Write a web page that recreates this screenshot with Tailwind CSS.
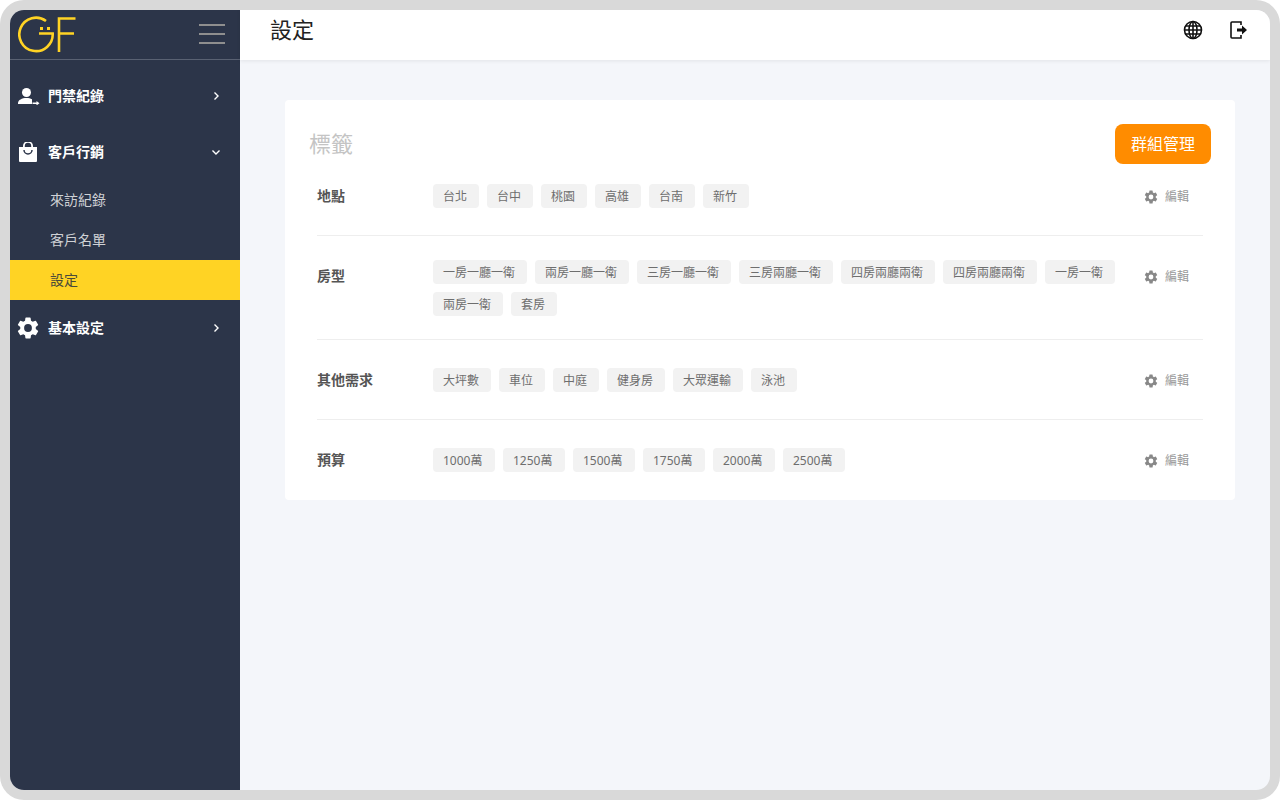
<!DOCTYPE html>
<html lang="zh-Hant">
<head>
  <meta charset="UTF-8">
  <title>設定</title>
  <script src="https://cdn.jsdelivr.net/npm/@tailwindcss/browser@4"></script>
</head>
<body class="bg-white font-['Roboto','Noto_Sans_CJK_TC',sans-serif]">
  <div class="w-[1280px] h-[800px] bg-[#d9d9d9] rounded-[24px] p-[10px] overflow-hidden">
    <div class="flex h-[780px] rounded-[14px] overflow-hidden bg-[#f4f6fa]">

      <!-- Sidebar -->
      <aside class="w-[230px] shrink-0 bg-[#2c3549] text-white">
        <div class="h-[50px] flex items-center justify-between border-b border-[#596172] pl-[8px] pr-[15px] pb-[1px]">
          <svg class="w-[58px] h-[38px] -mt-[1px]" viewBox="0 0 58 38" fill="none" stroke="#ffd324" stroke-width="2.600">
            <path d="M28 6A16.700 16.700 0 1 0 34.700 18.500H21"/>
            <rect x="22" y="12" width="3" height="3" fill="#ffd324" stroke="none"/>
            <rect x="29" y="12" width="3" height="3" fill="#ffd324" stroke="none"/>
            <path d="M41 37V3.500H57.500M41 18.500H56"/>
          </svg>
          <div class="w-[26px] flex flex-col gap-[7px]">
            <div class="h-[2px] bg-[#8f8f8f]"></div>
            <div class="h-[2px] bg-[#8f8f8f]"></div>
            <div class="h-[2px] bg-[#8f8f8f]"></div>
          </div>
        </div>
        <nav class="pt-[8px]">
          <div class="h-[56px] flex items-center pl-[8px] pr-[18px] text-[14px] font-bold">
            <svg class="w-[22px] h-[18px] mr-[8px]" viewBox="0 0 22 18" fill="white">
              <circle cx="8.500" cy="5.500" r="4.500"/>
              <path d="M0 17v-1c0-3 4-5 8.500-5 2 0 4 .4 5.500 1.200V17z"/>
              <path d="M14.500 15.500h4v-1.500l3 2.200-3 2.200v-1.500h-4z"/>
            </svg>
            <span class="flex-1">門禁紀錄</span>
            <svg class="w-[12px] h-[12px]" viewBox="0 0 12 12" fill="none" stroke="white" stroke-width="1.4"><path d="M4.5 2.5 8 6l-3.500 3.500"/></svg>
          </div>
          <div class="h-[56px] flex items-center pl-[8px] pr-[18px] text-[14px] font-bold">
            <svg class="w-[22px] h-[20px] mr-[8px]" viewBox="0 0 22 20" fill="white">
              <g transform="translate(-1 0)">
                <path fill-rule="evenodd" d="M2 5h4V4a5 5 0 0 1 10 0v1h4v14a1 1 0 0 1-1 1H3a1 1 0 0 1-1-1zM7.800 5h6.400V4a3.200 3.200 0 0 0-6.400 0z"/>
                <path d="M7 8a4 4 0 0 0 8 0" fill="none" stroke="#2c3549" stroke-width="1.500"/>
              </g>
            </svg>
            <span class="flex-1">客戶行銷</span>
            <svg class="w-[12px] h-[12px]" viewBox="0 0 12 12" fill="none" stroke="white" stroke-width="1.4"><path d="M2.500 4.500 6 8l3.500-3.500"/></svg>
          </div>
          <div class="h-[40px] flex items-center pl-[40px] text-[14px] text-[#d0d2d6]">來訪紀錄</div>
          <div class="h-[40px] flex items-center pl-[40px] text-[14px] text-[#d0d2d6]">客戶名單</div>
          <div class="h-[40px] flex items-center pl-[40px] text-[14px] text-[#4a4a3a] bg-[#ffd324]">設定</div>
          <div class="h-[56px] flex items-center pl-[8px] pr-[18px] text-[14px] font-bold">
            <svg class="w-[26px] h-[26px] -ml-[3px] mr-[7px]" viewBox="0 0 24 24" fill="white"><path d="M19.140 12.940a7.100 7.100 0 0 0 0-1.880l2.030-1.580a.5.5 0 0 0 .12-.61l-1.920-3.320a.5.5 0 0 0-.59-.22l-2.390.96a7 7 0 0 0-1.620-.94l-.36-2.540a.5.500 0 0 0-.48-.41h-3.840a.5.500 0 0 0-.48.41l-.36 2.540a7 7 0 0 0-1.620.94l-2.390-.96a.5.500 0 0 0-.59.22L2.740 8.870a.5.500 0 0 0 .12.61l2.030 1.580a7.100 7.100 0 0 0 0 1.880l-2.030 1.580a.5.500 0 0 0-.12.61l1.920 3.320a.5.500 0 0 0 .59.22l2.390-.96a7 7 0 0 0 1.620.94l.36 2.540a.5.500 0 0 0 .48.41h3.840a.5.500 0 0 0 .48-.41l.36-2.540a7 7 0 0 0 1.620-.94l2.390.96a.5.500 0 0 0 .59-.22l1.920-3.320a.5.500 0 0 0-.12-.61zM12 15.600a3.600 3.600 0 1 1 0-7.200 3.600 3.600 0 0 1 0 7.200z"/></svg>
            <span class="flex-1">基本設定</span>
            <svg class="w-[12px] h-[12px]" viewBox="0 0 12 12" fill="none" stroke="white" stroke-width="1.4"><path d="M4.5 2.5 8 6l-3.500 3.500"/></svg>
          </div>
        </nav>
      </aside>

      <!-- Main -->
      <div class="flex-1 flex flex-col min-w-0">
        <header class="h-[50px] bg-white flex items-center justify-between pl-[30px] pr-[21px] pb-[10px] shadow-[0_1px_4px_rgba(0,0,0,0.08)]">
          <h1 class="text-[22px] text-[#222]">設定</h1>
          <div class="flex items-center gap-[26px]">
            <svg class="w-[20px] h-[20px]" viewBox="0 0 20 20" fill="none" stroke="#111" stroke-width="1.600">
              <circle cx="10" cy="10" r="8.500"/>
              <ellipse cx="10" cy="10" rx="4" ry="8.500"/>
              <path d="M10 1.500v17M1.500 10h17M2.800 6h14.400M2.800 14h14.400"/>
            </svg>
            <svg class="w-[20px] h-[20px]" viewBox="0 0 20 20" fill="none" stroke="#111" stroke-width="1.600">
              <path d="M12 5V2H3a1 1 0 0 0-1 1v14a1 1 0 0 0 1 1h9v-3"/>
              <path d="M8 8.500h5V5.500l5 4.500-5 4.500v-3H8z" fill="#111" stroke="none"/>
            </svg>
          </div>
        </header>

        <main class="flex-1 pt-[40px] px-[45px]">
          <section class="bg-white rounded-[4px] w-[950px] px-[24px] pt-[24px] font-['Noto_Sans','Noto_Sans_CJK_TC',sans-serif]">
            <div class="flex items-center justify-between h-[40px]">
              <h2 class="text-[22px] text-[#c4c4c4] font-['Roboto','Noto_Sans_CJK_TC',sans-serif]">標籤</h2>
              <button class="w-[96px] h-[40px] rounded-[8px] bg-[#ff8c00] text-white text-[16px]">群組管理</button>
            </div>
            <div class="mx-[8px] -mt-[8px]">

              <div class="flex min-h-[80px] border-b border-[#eeeeee]">
                <div class="w-[116px] h-[79px] shrink-0 flex items-center text-[14px] font-bold text-[#555]">地點</div>
                <div class="flex-1 flex flex-wrap content-center gap-[8px] pt-[24px] pb-[23px]">
                  <span class="h-[24px] pl-[10px] pr-[12px] pt-[1px] flex items-center rounded-[4px] bg-[#f2f2f2] text-[12px] text-[#6e6e6e]">台北</span>
                  <span class="h-[24px] pl-[10px] pr-[12px] pt-[1px] flex items-center rounded-[4px] bg-[#f2f2f2] text-[12px] text-[#6e6e6e]">台中</span>
                  <span class="h-[24px] pl-[10px] pr-[12px] pt-[1px] flex items-center rounded-[4px] bg-[#f2f2f2] text-[12px] text-[#6e6e6e]">桃園</span>
                  <span class="h-[24px] pl-[10px] pr-[12px] pt-[1px] flex items-center rounded-[4px] bg-[#f2f2f2] text-[12px] text-[#6e6e6e]">高雄</span>
                  <span class="h-[24px] pl-[10px] pr-[12px] pt-[1px] flex items-center rounded-[4px] bg-[#f2f2f2] text-[12px] text-[#6e6e6e]">台南</span>
                  <span class="h-[24px] pl-[10px] pr-[12px] pt-[1px] flex items-center rounded-[4px] bg-[#f2f2f2] text-[12px] text-[#6e6e6e]">新竹</span>
                </div>
                <div class="w-[70px] h-[79px] shrink-0 flex items-center gap-[6px] text-[12px] text-[#999] pl-[10px] pt-[2px]">
                  <svg class="w-[16px] h-[16px]" viewBox="0 0 24 24" fill="#888"><path d="M19.140 12.940a7.100 7.100 0 0 0 0-1.880l2.030-1.580a.5.5 0 0 0 .12-.61l-1.920-3.320a.5.5 0 0 0-.59-.22l-2.390.96a7 7 0 0 0-1.620-.94l-.36-2.540a.5.500 0 0 0-.48-.41h-3.840a.5.500 0 0 0-.48.41l-.36 2.540a7 7 0 0 0-1.620.94l-2.390-.96a.5.500 0 0 0-.59.22L2.740 8.870a.5.500 0 0 0 .12.61l2.030 1.580a7.100 7.100 0 0 0 0 1.880l-2.030 1.580a.5.500 0 0 0-.12.61l1.920 3.320a.5.500 0 0 0 .59.22l2.390-.96a7 7 0 0 0 1.620.94l.36 2.540a.5.500 0 0 0 .48.41h3.840a.5.500 0 0 0 .48-.41l.36-2.540a7 7 0 0 0 1.620-.94l2.390.96a.5.500 0 0 0 .59-.22l1.920-3.320a.5.500 0 0 0-.12-.61zM12 15.600a3.600 3.600 0 1 1 0-7.200 3.600 3.600 0 0 1 0 7.200z"/></svg>
                  編輯
                </div>
              </div>

              <div class="flex min-h-[80px] border-b border-[#eeeeee]">
                <div class="w-[116px] h-[79px] shrink-0 flex items-center text-[14px] font-bold text-[#555]">房型</div>
                <div class="flex-1 flex flex-wrap content-center gap-[8px] pt-[24px] pb-[23px]">
                  <span class="h-[24px] pl-[10px] pr-[12px] pt-[1px] flex items-center rounded-[4px] bg-[#f2f2f2] text-[12px] text-[#6e6e6e]">一房一廳一衛</span>
                  <span class="h-[24px] pl-[10px] pr-[12px] pt-[1px] flex items-center rounded-[4px] bg-[#f2f2f2] text-[12px] text-[#6e6e6e]">兩房一廳一衛</span>
                  <span class="h-[24px] pl-[10px] pr-[12px] pt-[1px] flex items-center rounded-[4px] bg-[#f2f2f2] text-[12px] text-[#6e6e6e]">三房一廳一衛</span>
                  <span class="h-[24px] pl-[10px] pr-[12px] pt-[1px] flex items-center rounded-[4px] bg-[#f2f2f2] text-[12px] text-[#6e6e6e]">三房兩廳一衛</span>
                  <span class="h-[24px] pl-[10px] pr-[12px] pt-[1px] flex items-center rounded-[4px] bg-[#f2f2f2] text-[12px] text-[#6e6e6e]">四房兩廳兩衛</span>
                  <span class="h-[24px] pl-[10px] pr-[12px] pt-[1px] flex items-center rounded-[4px] bg-[#f2f2f2] text-[12px] text-[#6e6e6e]">四房兩廳兩衛</span>
                  <span class="h-[24px] pl-[10px] pr-[12px] pt-[1px] flex items-center rounded-[4px] bg-[#f2f2f2] text-[12px] text-[#6e6e6e]">一房一衛</span>
                  <span class="h-[24px] pl-[10px] pr-[12px] pt-[1px] flex items-center rounded-[4px] bg-[#f2f2f2] text-[12px] text-[#6e6e6e]">兩房一衛</span>
                  <span class="h-[24px] pl-[10px] pr-[12px] pt-[1px] flex items-center rounded-[4px] bg-[#f2f2f2] text-[12px] text-[#6e6e6e]">套房</span>
                </div>
                <div class="w-[70px] h-[79px] shrink-0 flex items-center gap-[6px] text-[12px] text-[#999] pl-[10px] pt-[2px]">
                  <svg class="w-[16px] h-[16px]" viewBox="0 0 24 24" fill="#888"><path d="M19.140 12.940a7.100 7.100 0 0 0 0-1.880l2.030-1.580a.5.5 0 0 0 .12-.61l-1.920-3.320a.5.5 0 0 0-.59-.22l-2.390.96a7 7 0 0 0-1.620-.94l-.36-2.540a.5.500 0 0 0-.48-.41h-3.840a.5.500 0 0 0-.48.41l-.36 2.540a7 7 0 0 0-1.620.94l-2.390-.96a.5.500 0 0 0-.59.22L2.740 8.870a.5.500 0 0 0 .12.61l2.030 1.580a7.100 7.100 0 0 0 0 1.880l-2.030 1.580a.5.500 0 0 0-.12.61l1.920 3.320a.5.500 0 0 0 .59.22l2.390-.96a7 7 0 0 0 1.620.94l.36 2.540a.5.500 0 0 0 .48.41h3.840a.5.500 0 0 0 .48-.41l.36-2.540a7 7 0 0 0 1.620-.94l2.390.96a.5.500 0 0 0 .59-.22l1.920-3.320a.5.500 0 0 0-.12-.61zM12 15.600a3.600 3.600 0 1 1 0-7.200 3.600 3.600 0 0 1 0 7.200z"/></svg>
                  編輯
                </div>
              </div>

              <div class="flex min-h-[80px] border-b border-[#eeeeee]">
                <div class="w-[116px] h-[79px] shrink-0 flex items-center text-[14px] font-bold text-[#555]">其他需求</div>
                <div class="flex-1 flex flex-wrap content-center gap-[8px] pt-[24px] pb-[23px]">
                  <span class="h-[24px] pl-[10px] pr-[12px] pt-[1px] flex items-center rounded-[4px] bg-[#f2f2f2] text-[12px] text-[#6e6e6e]">大坪數</span>
                  <span class="h-[24px] pl-[10px] pr-[12px] pt-[1px] flex items-center rounded-[4px] bg-[#f2f2f2] text-[12px] text-[#6e6e6e]">車位</span>
                  <span class="h-[24px] pl-[10px] pr-[12px] pt-[1px] flex items-center rounded-[4px] bg-[#f2f2f2] text-[12px] text-[#6e6e6e]">中庭</span>
                  <span class="h-[24px] pl-[10px] pr-[12px] pt-[1px] flex items-center rounded-[4px] bg-[#f2f2f2] text-[12px] text-[#6e6e6e]">健身房</span>
                  <span class="h-[24px] pl-[10px] pr-[12px] pt-[1px] flex items-center rounded-[4px] bg-[#f2f2f2] text-[12px] text-[#6e6e6e]">大眾運輸</span>
                  <span class="h-[24px] pl-[10px] pr-[12px] pt-[1px] flex items-center rounded-[4px] bg-[#f2f2f2] text-[12px] text-[#6e6e6e]">泳池</span>
                </div>
                <div class="w-[70px] h-[79px] shrink-0 flex items-center gap-[6px] text-[12px] text-[#999] pl-[10px] pt-[2px]">
                  <svg class="w-[16px] h-[16px]" viewBox="0 0 24 24" fill="#888"><path d="M19.140 12.940a7.100 7.100 0 0 0 0-1.880l2.030-1.580a.5.5 0 0 0 .12-.61l-1.920-3.320a.5.5 0 0 0-.59-.22l-2.390.96a7 7 0 0 0-1.620-.94l-.36-2.540a.5.500 0 0 0-.48-.41h-3.840a.5.500 0 0 0-.48.41l-.36 2.540a7 7 0 0 0-1.620.94l-2.390-.96a.5.500 0 0 0-.59.22L2.740 8.870a.5.500 0 0 0 .12.61l2.030 1.580a7.100 7.100 0 0 0 0 1.880l-2.030 1.580a.5.500 0 0 0-.12.61l1.920 3.320a.5.500 0 0 0 .59.22l2.390-.96a7 7 0 0 0 1.620.94l.36 2.540a.5.500 0 0 0 .48.41h3.840a.5.500 0 0 0 .48-.41l.36-2.540a7 7 0 0 0 1.620-.94l2.390.96a.5.500 0 0 0 .59-.22l1.920-3.320a.5.500 0 0 0-.12-.61zM12 15.600a3.600 3.600 0 1 1 0-7.200 3.600 3.600 0 0 1 0 7.200z"/></svg>
                  編輯
                </div>
              </div>

              <div class="flex min-h-[80px]">
                <div class="w-[116px] h-[79px] shrink-0 flex items-center text-[14px] font-bold text-[#555]">預算</div>
                <div class="flex-1 flex flex-wrap content-center gap-[8px] pt-[24px] pb-[24px]">
                  <span class="h-[24px] w-[62px] pl-[10px] pt-[1px] flex items-center rounded-[4px] bg-[#f2f2f2] text-[12px] text-[#6e6e6e]">1000萬</span>
                  <span class="h-[24px] w-[62px] pl-[10px] pt-[1px] flex items-center rounded-[4px] bg-[#f2f2f2] text-[12px] text-[#6e6e6e]">1250萬</span>
                  <span class="h-[24px] w-[62px] pl-[10px] pt-[1px] flex items-center rounded-[4px] bg-[#f2f2f2] text-[12px] text-[#6e6e6e]">1500萬</span>
                  <span class="h-[24px] w-[62px] pl-[10px] pt-[1px] flex items-center rounded-[4px] bg-[#f2f2f2] text-[12px] text-[#6e6e6e]">1750萬</span>
                  <span class="h-[24px] w-[62px] pl-[10px] pt-[1px] flex items-center rounded-[4px] bg-[#f2f2f2] text-[12px] text-[#6e6e6e]">2000萬</span>
                  <span class="h-[24px] w-[62px] pl-[10px] pt-[1px] flex items-center rounded-[4px] bg-[#f2f2f2] text-[12px] text-[#6e6e6e]">2500萬</span>
                </div>
                <div class="w-[70px] h-[79px] shrink-0 flex items-center gap-[6px] text-[12px] text-[#999] pl-[10px] pt-[2px]">
                  <svg class="w-[16px] h-[16px]" viewBox="0 0 24 24" fill="#888"><path d="M19.140 12.940a7.100 7.100 0 0 0 0-1.880l2.030-1.580a.5.5 0 0 0 .12-.61l-1.920-3.320a.5.5 0 0 0-.59-.22l-2.390.96a7 7 0 0 0-1.620-.94l-.36-2.540a.5.500 0 0 0-.48-.41h-3.840a.5.500 0 0 0-.48.41l-.36 2.540a7 7 0 0 0-1.620.94l-2.390-.96a.5.500 0 0 0-.59.22L2.740 8.870a.5.500 0 0 0 .12.61l2.030 1.580a7.100 7.100 0 0 0 0 1.880l-2.030 1.580a.5.500 0 0 0-.12.61l1.920 3.320a.5.500 0 0 0 .59.22l2.390-.96a7 7 0 0 0 1.620.94l.36 2.540a.5.500 0 0 0 .48.41h3.840a.5.500 0 0 0 .48-.41l.36-2.540a7 7 0 0 0 1.620-.94l2.390.96a.5.500 0 0 0 .59-.22l1.920-3.320a.5.500 0 0 0-.12-.61zM12 15.600a3.600 3.600 0 1 1 0-7.200 3.600 3.600 0 0 1 0 7.200z"/></svg>
                  編輯
                </div>
              </div>

            </div>
          </section>
        </main>
      </div>
    </div>
  </div>
</body>
</html>
